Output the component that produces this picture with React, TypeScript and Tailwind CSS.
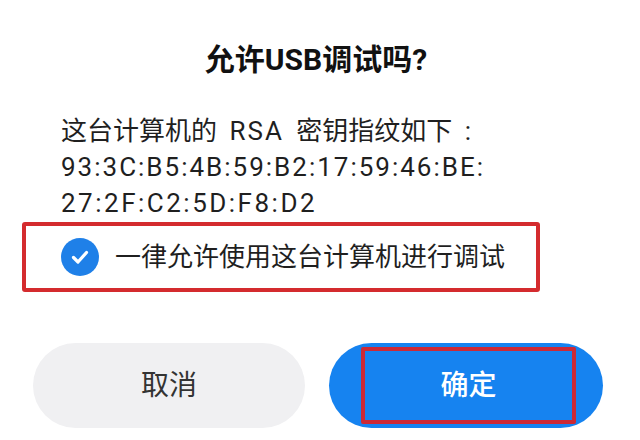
import React, { useState } from 'react';

const font = { fontFamily: 'Roboto, "Noto Sans CJK SC", sans-serif' };

export default function App() {
  const [always, setAlways] = useState(true);

  return (
    <div className="w-[640px] h-[440px] bg-white overflow-hidden" style={font}>
      {/* Title */}
      <h1 className="pt-[42px] pr-[8px] text-center text-[30px] leading-[36px] font-bold text-[#111111]">
        允许USB调试吗?
      </h1>

      {/* Fingerprint */}
      <div className="mt-[35px] pl-[61px] text-[26px] leading-[36px] text-[#1f1f1f]">
        <p className="[word-spacing:6px]">
          这台计算机的 <span className="tracking-[2px]">RSA</span> 密钥指纹如下 :
        </p>
        <p className="tracking-[2px]">93:3C:B5:4B:59:B2:17:59:46:BE:</p>
        <p className="tracking-[2.5px]">27:2F:C2:5D:F8:D2</p>
      </div>

      {/* Always allow */}
      <div
        className="ml-[22px] mt-[1px] w-[518px] h-[70px] flex items-center gap-[16px] pl-[35px] border-[4px] border-[#d42b2e] rounded-[3px] cursor-pointer"
        onClick={() => setAlways(!always)}
      >
        <span
          className={
            'w-[38px] h-[38px] rounded-full flex items-center justify-center shrink-0 ' +
            (always ? 'bg-[#1f80e8]' : 'border-2 border-gray-400')
          }
        >
          {always && (
            <svg width="22" height="22" viewBox="0 0 22 22" fill="none">
              <path
                d="M4.5 11.5 L9 16 L17.5 6.5"
                stroke="white"
                strokeWidth="3.2"
                strokeLinecap="round"
                strokeLinejoin="round"
              />
            </svg>
          )}
        </span>
        <span className="text-[26px] leading-[36px] text-[#1f1f1f]">一律允许使用这台计算机进行调试</span>
      </div>

      {/* Buttons */}
      <div className="mt-[51px] pl-[33px] flex gap-[24px]">
        <button className="w-[272px] h-[85px] rounded-full bg-[#f0f0f2] text-[28px] text-[#333333]">
          取消
        </button>
        <button className="w-[274px] h-[85px] rounded-full bg-[#1683f0] pl-[32px] pr-[27px] py-[4px] flex">
          <span className="flex-1 flex items-center justify-center border-[4px] border-[#cc2936] rounded-[2px] text-[28px] font-medium text-white">
            确定
          </span>
        </button>
      </div>
    </div>
  );
}
